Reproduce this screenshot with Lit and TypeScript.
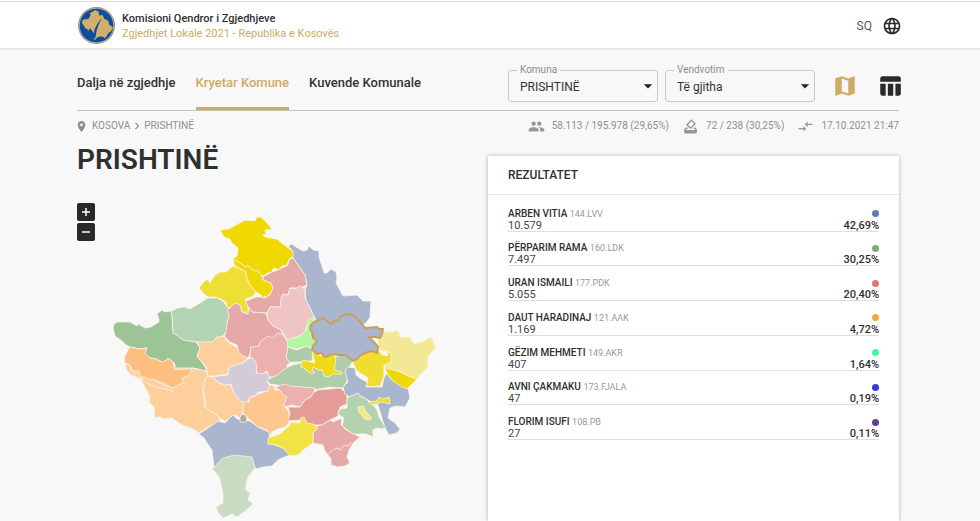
import { LitElement, html, svg, css } from "lit";
import { customElement } from "lit/decorators.js";

interface Result {
  name: string;
  list: string;
  votes: string;
  share: string;
  tone: string;
}

const RESULTS: Result[] = [
  { name: "ARBEN VITIA", list: "144.LVV", votes: "10.579", share: "42,69%", tone: "#5b7db1" },
  { name: "PËRPARIM RAMA", list: "160.LDK", votes: "7.497", share: "30,25%", tone: "#74b06f" },
  { name: "URAN ISMAILI", list: "177.PDK", votes: "5.055", share: "20,40%", tone: "#d97b6c" },
  { name: "DAUT HARADINAJ", list: "121.AAK", votes: "1.169", share: "4,72%", tone: "#ffa246" },
  { name: "GËZIM MEHMETI", list: "149.AKR", votes: "407", share: "1,64%", tone: "#3dfba4" },
  { name: "AVNI ÇAKMAKU", list: "173.FJALA", votes: "47", share: "0,19%", tone: "#3338e0" },
  { name: "FLORIM ISUFI", list: "108.PB", votes: "27", share: "0,11%", tone: "#5f3f9e" },
];

// Municipalities: fill colour and outline, painted in order.
const REGIONS: [string, string][] = [
  ["#a9b6cd", "288,246 292,244 296,247 303,251 307,250 309,246 313,250 319,251 319,257 322,266 324,273 327,273 331,269 336,272 337,277 336,283 343,296 357,295 363,301 371,301 370,317 366,323 362,325 340,340 320,325 314,317 311,310 306,301 305,289 307,285 305,275 293,258 292,250"],
  ["#efde33", "199,288 203,283 207,279 210,283 215,275 221,272 226,272 233,266 245,271 247,278 249,284 256,292 252,297 245,299 248,305 248,314 242,312 240,305 235,303 230,308 227,307 226,302 221,299 215,297 208,297 204,294"],
  ["#efd900", "233,260 237,256 245,264 259,270 262,276 263,280 271,283 273,288 270,294 268,295 267,298 265,296 263,298 261,295 256,292 249,284 247,278 245,271 235,266"],
  ["#efd900", "220,230 229,229 236,225 245,220 255,221 257,217 261,217 267,223 272,229 265,230 266,234 263,235 265,237 277,239 284,245 293,251 293,257 289,259 287,265 282,266 278,270 275,268 273,269 272,272 268,273 263,276 259,273 258,270 255,271 251,269 249,266 245,267 242,264 240,263 237,261 233,260 234,258 237,256 238,248 232,243 230,239 224,237"],
  ["#b3d4b2", "171,311 178,308 185,307 190,309 200,303 208,298 217,298 223,301 227,307 229,309 230,316 227,323 229,330 224,334 223,341 217,337 212,343 196,342 183,340 173,333 172,318"],
  ["#9cc497", "113,328 114,324 117,322 130,322 137,326 138,324 145,328 151,327 159,322 159,319 157,314 162,310 164,312 171,311 172,318 173,333 178,336 183,340 196,342 200,348 197,357 201,361 205,367 207,371 193,368 180,370 175,370 175,364 173,362 168,358 165,361 162,362 156,359 150,358 145,353 147,348 140,349 130,347 126,345 122,341 115,336"],
  ["#fdcf9d", "125,364 127,371 133,376 141,380 146,389 150,397 149,402 154,407 155,418 160,417 163,419 172,418 182,425 193,429 199,433 208,427 220,421 218,416 205,407 204,397 203,390 205,380 208,376 206,371 192,368 160,368"],
  ["#fdcf9d", "125,365 130,365 131,372 135,375 139,371 142,374 153,379 165,386 172,387 173,392 169,390 160,388 150,385 142,379 137,377 131,375 127,371"],
  ["#fdbf7f", "130,347 140,349 147,348 145,353 150,358 156,359 162,362 165,361 168,358 173,362 175,370 183,369 192,369 190,374 187,376 182,378 183,383 178,385 172,388 165,384 160,382 153,379 149,380 145,377 140,377 139,371 133,371 130,365 125,363 124,358 127,352"],
  ["#fdcf9d", "208,376 213,377 217,382 225,385 230,384 234,393 243,401 243,413 240,418 236,415 233,416 229,419 225,421 220,419 218,416 210,411 205,406 205,398 203,390 205,380"],
  ["#fdcf9d", "197,342 212,342 217,337 223,336 229,343 238,348 240,354 248,358 243,363 233,366 229,370 228,374 215,376 208,376 206,367 202,362 197,357 200,348"],
  ["#e7a9a8", "230,308 235,303 240,305 242,312 248,314 249,308 253,312 266,313 268,320 273,326 280,329 284,336 278,334 273,339 268,337 260,343 259,347 251,347 250,354 248,358 243,356 239,353 237,345 230,342 224,336 226,332 227,323 229,316 227,310"],
  ["#e7a9a8", "263,277 272,272 278,270 288,265 289,260 293,258 298,265 305,275 307,285 300,288 290,288 288,295 283,294 281,298 281,307 270,307 267,313 252,312 247,305 246,301 256,297 261,297 265,298 270,295 273,288 271,283 263,280"],
  ["#eec5c4", "267,313 270,307 281,307 281,298 283,294 288,295 290,288 295,289 300,286 305,289 305,298 311,310 314,317 308,322 305,331 300,336 290,340 288,341 281,330 273,326 268,320"],
  ["#b3f5a3", "315,316 308,320 306,330 301,335 295,338 286,340 288,347 297,349 307,346 313,349 316,341 311,331 312,325"],
  ["#ebb0af", "250,357 251,347 259,346 260,342 268,336 273,338 278,333 283,335 287,341 288,348 286,357 290,363 287,365 287,370 282,374 278,377 269,377 267,371 262,374 257,374 256,366"],
  ["#accca7", "288,347 297,350 307,346 313,350 312,361 300,362 292,362 290,363 286,357"],
  ["#aecda9", "267,380 273,377 278,375 282,371 288,367 293,365 301,363 315,365 335,357 345,354 353,361 350,366 347,370 347,381 343,388 330,387 313,390 303,388 283,386 270,384"],
  ["#f0d919", "312,351 316,353 320,356 328,354 334,355 336,360 334,370 342,372 342,374 332,374 330,376 325,377 322,370 318,370 313,367 312,371 315,372 312,374 307,371 306,369 301,367 301,363 303,360 311,362 315,363"],
  ["#d3cbd7", "212,377 228,375 229,368 235,365 243,363 248,359 253,358 257,365 256,373 262,374 267,372 270,378 267,381 269,385 271,388 268,391 258,392 255,396 250,397 247,403 240,401 234,393 231,384 225,385 218,382"],
  ["#fdc78f", "243,402 249,402 250,397 255,396 258,394 268,391 270,385 274,386 275,390 284,390 287,397 285,407 289,412 289,423 285,427 278,429 272,432 271,436 267,430 258,427 247,417 243,413"],
  ["#ebb0af", "275,387 285,384 290,386 302,387 315,388 313,395 305,400 300,407 292,405 285,407 284,404 287,397 283,395 281,391"],
  ["#e59c99", "288,407 300,407 305,400 311,397 313,393 318,390 340,388 347,393 347,404 340,407 338,413 338,416 330,420 322,425 308,425 300,420 288,421 290,413"],
  ["#e7a9a8", "342,418 333,422 330,420 322,425 317,426 313,429 313,443 323,445 325,451 328,455 331,459 331,465 338,467 345,466 350,463 347,457 349,450 353,443 360,437 352,433 345,429 341,424"],
  ["#a9b6cd", "199,434 208,428 218,421 225,423 230,418 233,415 237,419 250,421 258,427 269,432 270,441 270,443 283,448 290,455 282,458 278,460 272,466 263,467 256,469 254,466 250,460 233,457 214,467 212,450 207,443 204,438"],
  ["#b3aa99", "240,417 243,414 246,416 247,419 246,422 240,422"],
  ["#c7dcc3", "212,469 218,463 223,458 235,455 243,456 252,457 255,468 248,477 246,484 246,490 250,493 248,500 253,504 245,511 237,517 232,514 223,518 219,514 216,507 223,503 223,493 219,477 215,472"],
  ["#f2e244", "268,438 280,434 289,426 291,422 300,423 301,418 304,417 307,423 313,424 318,428 313,433 313,443 303,450 298,455 290,456 283,448 276,445 268,444"],
  ["#f2e896", "378,336 383,331 392,332 396,330 399,332 400,337 410,337 414,344 423,341 431,337 436,347 433,351 428,357 428,367 421,374 417,379 410,377 400,372 385,369 384,364 391,360 388,352 378,350"],
  ["#efdd30", "353,363 365,353 370,352 378,349 382,355 387,356 388,352 391,353 391,362 384,365 384,376 380,386 366,387 368,378 357,371"],
  ["#a9b6cd", "345,371 348,367 355,368 356,375 361,379 367,382 366,387 382,387 384,378 387,373 392,380 408,388 410,398 405,407 396,406 390,408 388,418 395,423 400,429 397,433 389,435 385,428 381,415 378,405 358,395 350,397 345,394 343,387 348,382"],
  ["#efd900", "385,368 393,370 400,372 410,377 417,379 412,384 407,389 400,386 391,379 388,375"],
  ["#b3d3b0", "347,398 358,393 361,397 365,398 372,404 377,410 379,417 386,428 382,429 377,428 373,430 373,437 366,434 353,434 342,426 344,418 338,414 340,409 347,408"],
  ["#efdd20", "368,402 377,401 379,397 383,399 389,397 390,404 382,402 372,405"],
  ["#f2e87c", "358,407 363,406 366,412 372,418 370,420 365,419 359,412"],
];

const SELECTED =
  "311,325 314,322 323,318 331,324 334,321 338,320 340,317 345,315 350,314 355,317 359,321 363,325 365,328 377,327 379,329 383,329 382,334 380,338 375,337 369,337 373,341 378,347 377,353 372,351 365,353 361,355 357,359 353,361 349,358 345,355 338,355 332,354 325,357 321,353 318,354 312,350 313,346 317,341 313,338 312,332 310,329";

const icon = (cls: string, d: string) => html`
  <svg class="icon ${cls}" viewBox="0 0 24 24" aria-hidden="true"><path d=${d}></path></svg>
`;

const GLOBE =
  "M11.99 2C6.47 2 2 6.48 2 12s4.47 10 9.99 10C17.52 22 22 17.52 22 12S17.52 2 11.99 2zm6.93 6h-2.95c-.32-1.25-.78-2.45-1.38-3.56 1.84.63 3.37 1.91 4.33 3.56zM12 4.04c.83 1.2 1.48 2.53 1.91 3.96h-3.82c.43-1.43 1.08-2.76 1.91-3.96zM4.26 14C4.1 13.36 4 12.69 4 12s.1-1.36.26-2h3.38c-.08.66-.14 1.32-.14 2s.06 1.34.14 2H4.26zm.82 2h2.95c.32 1.25.78 2.45 1.38 3.56-1.84-.63-3.37-1.9-4.33-3.56zm2.95-8H5.08c.96-1.66 2.49-2.93 4.33-3.56C8.81 5.55 8.35 6.75 8.03 8zM12 19.96c-.83-1.2-1.48-2.53-1.91-3.96h3.82c-.43 1.43-1.08 2.76-1.91 3.96zM14.34 14H9.66c-.09-.66-.16-1.32-.16-2s.07-1.35.16-2h4.68c.09.65.16 1.32.16 2s-.07 1.34-.16 2zm.25 5.56c.6-1.11 1.06-2.31 1.38-3.56h2.95c-.96 1.65-2.49 2.93-4.33 3.56zM16.36 14c.08-.66.14-1.32.14-2s-.06-1.34-.14-2h3.38c.16.64.26 1.31.26 2s-.1 1.36-.26 2h-3.38z";
const MAP =
  "M20.5 3l-.16.03L15 5.1 9 3 3.36 4.9c-.21.07-.36.25-.36.48V20.5c0 .28.22.5.5.5l.16-.03L9 18.9l6 2.1 5.64-1.9c.21-.07.36-.25.36-.48V3.5c0-.28-.22-.5-.5-.5zM15 19l-6-2.11V5l6 2.11V19z";
const TABLE =
  "M10 10.02h5V21h-5zM17 21h3c1.1 0 2-.9 2-2v-9h-5v11zm3-18H5c-1.1 0-2 .9-2 2v3h19V5c0-1.1-.9-2-2-2zM3 19c0 1.1.9 2 2 2h3V10H3v9z";
const PEOPLE =
  "M16 11c1.66 0 2.99-1.34 2.99-3S17.66 5 16 5c-1.66 0-3 1.34-3 3s1.34 3 3 3zm-8 0c1.66 0 2.99-1.34 2.99-3S9.66 5 8 5C6.34 5 5 6.34 5 8s1.34 3 3 3zm0 2c-2.33 0-7 1.17-7 3.5V19h14v-2.5c0-2.33-4.67-3.5-7-3.5zm8 0c-.29 0-.62.02-.97.05 1.16.84 1.97 1.97 1.97 3.45V19h6v-2.5c0-2.33-4.67-3.5-7-3.5z";
const BALLOT =
  "M18 13h-.68l-2 2h1.91L19 17H5l1.78-2h2.05l-2-2H6l-3 3v4c0 1.1.89 2 1.99 2H19c1.1 0 2-.89 2-2v-4l-3-3zm-1-5.05l-4.95 4.95-3.54-3.54 4.95-4.95L17 7.95zm-4.24-5.66L6.39 8.66c-.39.39-.39 1.02 0 1.41l4.95 4.95c.39.39 1.02.39 1.41 0l6.36-6.36c.39-.39.39-1.02 0-1.41L14.16 2.3c-.38-.4-1.01-.4-1.4-.01z";
const ARROWS = "M9.010 14H2v2h7.010v3L13 15l-3.990-4v3zm5.980-1v-3H22V8h-7.010V5L11 9l3.990 4z";
const PIN =
  "M12 2C8.13 2 5 5.13 5 9c0 5.25 7 13 7 13s7-7.75 7-13c0-3.87-3.13-7-7-7zm0 9.5c-1.38 0-2.5-1.12-2.5-2.5s1.12-2.5 2.5-2.5 2.5 1.12 2.5 2.5-1.12 2.5-2.5 2.5z";
const CHEVRON = "M10 6L8.59 7.41 13.17 12l-4.58 4.59L10 18l6-6z";

@customElement("app-root")
export class AppRoot extends LitElement {
  static styles = css`
    :host {
      display: flex;
      flex-direction: column;
      box-sizing: border-box;
      min-height: 100vh;
      background: #f8f8f8;
      color: #2f2f2f;
      font-family: Roboto, "Liberation Sans", sans-serif;
      font-size: 12px;
      line-height: 16px;
    }
    * {
      box-sizing: border-box;
    }
    header {
      display: flex;
      align-items: center;
      justify-content: space-between;
      height: 50px;
      padding: 2px 81px 0 77px;
      background: #fff;
      border-top: 1px solid #fff;
      border-bottom: 2px solid #e8e8e8;
      box-shadow: inset 0 1px #dedede;
    }
    .brand {
      display: flex;
      align-items: center;
      gap: 6px;
      color: inherit;
      text-decoration: none;
      font-size: 11px;
      line-height: 15px;
    }
    .logo {
      width: 39px;
      height: 39px;
    }
    .brand-name {
      display: block;
      font-weight: 500;
    }
    .brand-sub {
      display: block;
      color: #d2a965;
    }
    button {
      display: flex;
      align-items: center;
      justify-content: center;
      padding: 0;
      border: 0;
      background: none;
      color: inherit;
      font: inherit;
      cursor: pointer;
    }
    .lang {
      gap: 10px;
      margin-right: -3px;
      font-size: 12px;
      color: #555;
    }
    .icon {
      display: block;
      width: 20px;
      height: 20px;
      fill: currentColor;
    }
    .globe {
      color: #2a2a2a;
    }
    main {
      flex: 1;
      display: flex;
      flex-direction: column;
      padding: 0 81px 0 77px;
    }
    .bar {
      display: flex;
      justify-content: space-between;
      height: 61px;
      border-bottom: 1px solid #c4c4c4;
    }
    nav {
      display: flex;
      gap: 20px;
    }
    .tab {
      display: flex;
      align-items: center;
      padding-top: 8px;
      border-bottom: 3px solid transparent;
      color: #333;
      font-size: 13px;
      font-weight: 500;
      text-decoration: none;
      white-space: nowrap;
    }
    .tab.active {
      color: #d2a965;
      border-color: #d2a965;
    }
    .tools {
      display: flex;
      align-items: center;
      padding-top: 11px;
    }
    .field {
      position: relative;
      margin-right: 7px;
    }
    .field label {
      position: absolute;
      top: -8px;
      left: 9px;
      padding: 0 3px;
      background: #f8f8f8;
      color: #8c8c8c;
      font-size: 10px;
    }
    .field .caret {
      position: absolute;
      top: 6px;
      right: 0;
      color: #222;
      pointer-events: none;
    }
    select {
      display: block;
      width: 150px;
      height: 32px;
      padding: 2px 24px 0 11px;
      appearance: none;
      border: 1px solid #c8c8c8;
      border-radius: 3px;
      background: transparent;
      color: #333;
      font: inherit;
    }
    .view {
      width: 24px;
      height: 24px;
    }
    .view-map {
      margin-left: 11px;
      color: #d2a965;
    }
    .view-table {
      margin: 0 -3px 0 21px;
      color: #2a2a2a;
    }
    .view .icon {
      width: 26px;
      height: 26px;
      flex: none;
    }
    .meta {
      display: flex;
      justify-content: space-between;
      align-items: center;
      height: 30px;
      color: #8f8f8f;
      font-size: 10px;
    }
    .crumbs,
    .stats,
    .stat {
      display: flex;
      align-items: center;
    }
    .crumbs a {
      color: inherit;
      text-decoration: none;
    }
    .pin {
      width: 13px;
      height: 13px;
      margin: 0 4px 0 -2px;
    }
    .chevron {
      width: 14px;
      height: 14px;
    }
    .stats {
      gap: 13px;
    }
    .stat {
      gap: 7px;
    }
    .stat .icon {
      width: 17px;
      height: 17px;
      color: #979797;
    }
    .content {
      flex: 1;
      display: grid;
      grid-template-columns: 1fr 1fr;
    }
    h1 {
      margin: 3px 0 0;
      font-size: 28px;
      line-height: 32px;
      font-weight: 600;
    }
    .map-box {
      position: relative;
      margin-top: 15px;
    }
    .map {
      display: block;
      width: 100%;
      stroke: #fbf3e6;
      stroke-opacity: 0.8;
      stroke-linejoin: round;
      overflow: visible;
    }
    .zoom {
      position: absolute;
      top: 12px;
      left: 0;
      display: grid;
      gap: 2px;
    }
    .zoom button {
      width: 18px;
      height: 18px;
      border-radius: 2px;
      background: #292929;
      color: #fff;
    }
    .zoom svg {
      width: 8px;
      height: 8px;
      stroke: currentColor;
    }
    .card {
      margin-top: 15px;
      background: #fff;
      box-shadow: 0 0 4px rgba(0, 0, 0, 0.3);
    }
    h2 {
      margin: 0;
      padding: 0 20px;
      border-bottom: 1px solid #e4e4e4;
      font-size: 12px;
      line-height: 38px;
      font-weight: 500;
    }
    .results {
      display: grid;
      grid-auto-rows: 1fr;
      height: 243px;
      margin: 2px 20px 0;
      padding: 0;
      list-style: none;
    }
    .result {
      display: grid;
      grid-template-columns: 1fr auto;
      align-content: end;
      align-items: center;
      border-bottom: 1px solid #dedede;
      font-size: 10px;
      line-height: 14px;
    }
    .name {
      font-weight: 500;
    }
    .list {
      color: #999;
      font-size: 9px;
    }
    .dot {
      justify-self: end;
      width: 7px;
      height: 7px;
      border-radius: 50%;
    }
    .votes,
    .share {
      font-size: 11px;
      line-height: 10px;
    }
    .votes {
      color: #444;
    }
    .share {
      font-weight: 500;
    }
  `;

  private logo() {
    return html`
      <svg class="logo" viewBox="0 0 40 40" aria-hidden="true">
        <circle cx="20" cy="20" r="19" fill="#8b8b8f"></circle>
        <circle cx="20" cy="20" r="17.8" fill="#0d4f9f" stroke="#d3b47a" stroke-width="1"></circle>
        <path
          fill="#d2b06c"
          d="M14 7l5-3 3 2 1 4 3-1 2 4 4 2 1 4 4 3-2 4-3 2-3 5-4-2-4 1-3 3-2-2 1-5-5-3-4-3-3-5 1-3 6-1 2-4-1-2z"
        ></path>
        <path fill="#0d4f9f" d="M12 24l2-1 3 5c1-6 4-11 9-16-4 6-6 12-7 20l-2 3-5-11z"></path>
      </svg>
    `;
  }

  private field(id: string, label: string, value: string) {
    return html`
      <div class="field">
        <select id=${id}><option>${value}</option></select>
        <label for=${id}>${label}</label>
        ${icon("caret", "M7 10l5 5 5-5z")}
      </div>
    `;
  }

  private map() {
    return html`
      <svg class="map" viewBox="77 191 411 328" stroke-width="1" role="img" aria-label="Kosova">
        ${REGIONS.map(([fill, points]) => svg`<polygon fill=${fill} points=${points}></polygon>`)}
        <polyline fill="none" points="328,454 333,450 337,448 341,450 344,445 348,446 351,442"></polyline>
        <polygon
          fill="#a9b6cd"
          stroke="#c99f5d"
          stroke-width="2"
          stroke-opacity="1"
          points=${SELECTED}
        ></polygon>
      </svg>
    `;
  }

  render() {
    return html`
      <header>
        <a class="brand" href="#">
          ${this.logo()}
          <span>
            <span class="brand-name">Komisioni Qendror i Zgjedhjeve</span>
            <span class="brand-sub">Zgjedhjet Lokale 2021 - Republika e Kosovës</span>
          </span>
        </a>
        <button class="lang">SQ ${icon("globe", GLOBE)}</button>
      </header>
      <main>
        <div class="bar">
          <nav>
            <a class="tab" href="#">Dalja në zgjedhje</a>
            <a class="tab active" href="#">Kryetar Komune</a>
            <a class="tab" href="#">Kuvende Komunale</a>
          </nav>
          <div class="tools">
            ${this.field("komuna", "Komuna", "PRISHTINË")}
            ${this.field("vendvotim", "Vendvotim", "Të gjitha")}
            <button class="view view-map" aria-label="Harta">${icon("", MAP)}</button>
            <button class="view view-table" aria-label="Tabela">${icon("", TABLE)}</button>
          </div>
        </div>
        <div class="meta">
          <div class="crumbs">
            ${icon("pin", PIN)}<a href="#">KOSOVA</a>${icon("chevron", CHEVRON)}<span>PRISHTINË</span>
          </div>
          <div class="stats">
            <span class="stat">${icon("", PEOPLE)}58.113 / 195.978 (29,65%)</span>
            <span class="stat">${icon("", BALLOT)}72 / 238 (30,25%)</span>
            <span class="stat">${icon("", ARROWS)}17.10.2021 21:47</span>
          </div>
        </div>
        <div class="content">
          <section>
            <h1>PRISHTINË</h1>
            <div class="map-box">
              ${this.map()}
              <div class="zoom">
                <button aria-label="Zmadho">
                  <svg viewBox="0 0 8 8"><path stroke-width="1.5" d="M0 4h8M4 0v8"></path></svg>
                </button>
                <button aria-label="Zvogëlo">
                  <svg viewBox="0 0 8 8"><path stroke-width="1.5" d="M0 4h8"></path></svg>
                </button>
              </div>
            </div>
          </section>
          <section class="card">
            <h2>REZULTATET</h2>
            <ul class="results">
              ${RESULTS.map(
                (r) => html`
                  <li class="result">
                    <span><span class="name">${r.name}</span> <span class="list">${r.list}</span></span>
                    <span class="dot" style="background:${r.tone}"></span>
                    <span class="votes">${r.votes}</span>
                    <span class="share">${r.share}</span>
                  </li>
                `
              )}
            </ul>
          </section>
        </div>
      </main>
    `;
  }
}
